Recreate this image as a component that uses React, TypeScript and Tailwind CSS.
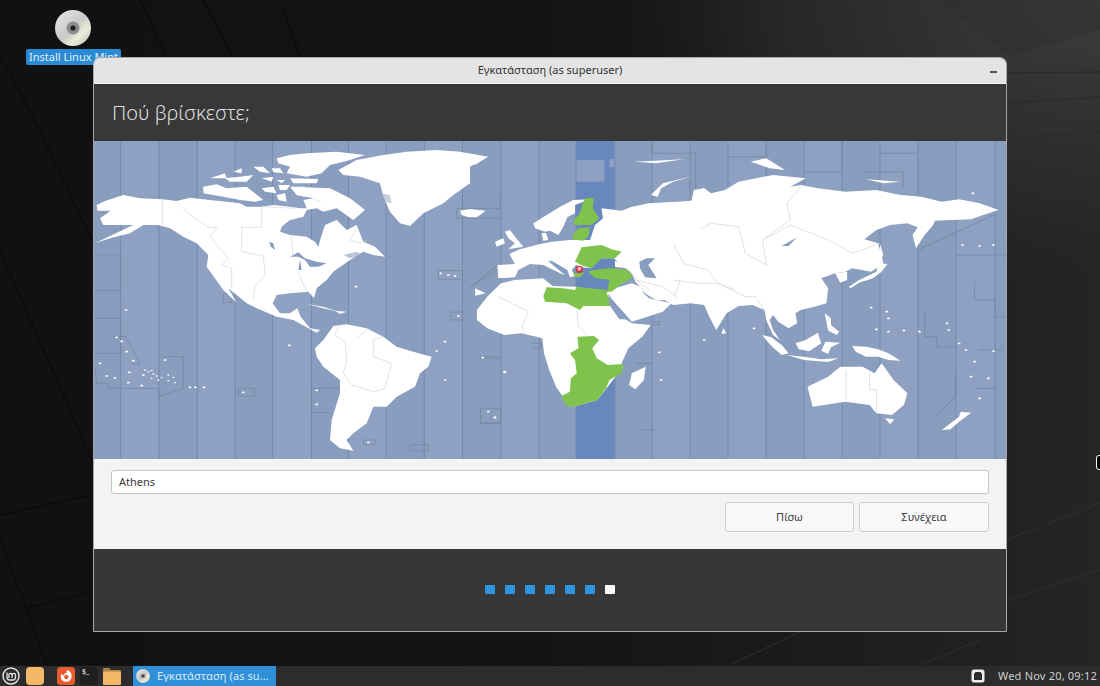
const FONT = "font-['Noto_Sans',sans-serif]";

const base = '#899dbf';
const band = '#6787bd';
const land = '#ffffff';
const green = '#7fc24c';

const LINES = [120.7, 159, 197.3, 235, 272.7, 311.5, 348.5, 386, 424.3, 462.5, 501, 539, 576, 615, 652, 690, 728, 766, 804, 842, 880, 918, 956, 995];

function P({ d, f = land }: { d: string; f?: string }) {
  return <polygon points={d} fill={f} />;
}

function Border({ d }: { d: string }) {
  return <polyline points={d} fill="none" stroke="#d4d4d4" strokeWidth="2" />;
}

function Zone({ d }: { d: string }) {
  return <polyline points={d} fill="none" stroke="#72869f" strokeOpacity="0.7" strokeWidth="3" />;
}

function Dots({ items, w = 8, h = 5 }: { items: number[][]; w?: number; h?: number }) {
  return (
    <>
      {items.map(([x, y]) => (
        <rect key={`${x}-${y}`} x={x - w / 2} y={y - h / 2} width={w} height={h} rx="2" fill={land} />
      ))}
    </>
  );
}

function WorldMap() {
  return (
    <div className="h-[318px] w-[912px] shrink-0 overflow-hidden bg-[#899dbf]">
      <svg viewBox="94 141 912 318" className="block h-[318px] w-[912px] blur-[0.35px]">
        <rect x="94" y="141" width="912" height="318" fill={base} />
        {LINES.map((x, i) =>
          i % 2 === 0 ? <rect key={`s${x}`} x={x} y="141" width={(LINES[i + 1] ?? 1006) - x} height="318" fill="#8ea1c3" /> : null,
        )}
        {LINES.map((x) => (
          <line key={x} x1={x} x2={x} y1="141" y2="459" stroke="#7589aa" strokeWidth="1" />
        ))}
        <g transform="translate(90 140) scale(0.33333)">
          <Zone d="15,345 92,345 92,452 15,452" />
          <Zone d="15,535 92,535 92,640 15,640" />
          <Zone d="70,590 108,590 150,672 125,672" />
          <Zone d="15,685 20,730 55,730 55,745 205,745 205,770 280,745 280,650 212,650" />
          <Zone d="445,745 495,745 495,768 445,768 445,745" />
          <Zone d="665,745 750,745" />
          <Zone d="665,745 665,818 720,818" />
          <Zone d="1045,392 1118,392 1118,418 1045,418 1045,392" />
          <Zone d="1082,516 1118,516 1118,540 1082,540 1082,516" />
          <Zone d="1172,805 1232,805 1232,850 1172,850 1172,805" />
          <Zone d="1170,650 1232,650" />
          <Zone d="1100,205 1230,205 1230,165" />
          <Zone d="1100,205 1100,235 1232,235" />
          <Zone d="1150,435 1232,385 1232,420" />
          <Zone d="820,900 855,900 855,914 820,914 820,900" />
          <Zone d="960,914 1015,914 1015,932 960,932 960,914" />
          <Zone d="400,462 425,462 425,488 400,488 400,462" />
        </g>
        <g transform="translate(470 140) scale(0.3444 0.33333)">
          <polygon points="308,3 418,3 418,58 405,58 405,82 420,82 420,957 308,957 308,125 390,125 390,60 308,60" fill={band} />
          <Zone d="530,40 655,40 655,150" />
          <Zone d="530,0 530,40" />
          <Zone d="750,50 860,50 860,0" />
          <Zone d="970,95 1080,95 1080,5" />
          <Zone d="1190,40 1300,40" />
          <Zone d="1145,95 1258,95 1258,145" />
          <Zone d="1300,330 1520,225" />
          <Zone d="1410,345 1560,345" />
          <Zone d="1465,425 1465,480 1525,480 1525,530 1560,530" />
          <Zone d="1320,510 1320,590 1355,590 1355,620 1410,620" />
          <Zone d="1475,630 1545,630" />
          <Zone d="1355,825 1410,770 1410,700" />
          <Zone d="30,805 30,850 88,850" />
          <Zone d="30,655 90,655" />
          <Zone d="500,870 535,870" />
          <Zone d="0,445 80,375" />
          <Zone d="530,545 550,545 550,555 530,555" />
          <Zone d="1465,745 1525,745" />
          <Zone d="530,670 480,670" />
          <Zone d="180,610 205,610 205,625 180,625" />
        </g>
        {/* the Americas */}
        <g transform="translate(90 140) scale(0.33333)">
          <P d="20,195 45,183 100,165 150,175 218,178 260,183 300,173 360,180 410,185 450,190 470,200 515,200 550,195 600,200 630,205 650,205 640,180 670,175 690,185 725,195 740,205 700,215 680,205 650,210 640,230 600,240 575,260 570,275 600,285 650,290 675,305 685,320 692,295 705,255 740,240 770,270 800,255 820,305 855,320 885,350 850,345 820,335 780,360 730,395 710,420 680,445 672,475 655,455 600,460 560,465 548,490 570,520 600,520 622,505 632,530 660,565 690,570 680,578 650,562 610,540 560,530 500,505 470,490 440,465 415,445 440,488 400,450 350,380 355,345 320,310 280,290 240,265 205,255 160,255 120,280 60,295 15,310 60,288 130,255 90,255 40,255 30,235 62,212 22,212" />
          <P d="340,140 380,133 410,145 470,140 520,180 495,185 450,180 400,170 340,160" />
          <P d="360,115 405,100 410,115 380,115" />
          <P d="405,115 450,110 490,105 470,125 420,125" />
          <P d="430,95 455,85 455,100" />
          <P d="490,80 520,80 540,100 510,95" />
          <P d="515,115 550,110 545,125" />
          <P d="515,145 550,140 560,160 525,155" />
          <P d="565,135 600,135 590,150 570,150" />
          <P d="600,115 685,117 680,130 610,130" />
          <P d="545,85 570,85 580,100 550,97" />
          <P d="560,55 600,45 650,40 740,35 825,45 770,63 720,75 695,100 650,110 590,100 600,80 565,70" />
          <P d="560,120 585,120 575,130" />
          <P d="560,165 585,160 590,185 565,180" />
          <P d="605,140 645,140 645,170 620,165" />
          <P d="600,140 720,145 780,175 825,210 790,240 740,205 700,190 670,175 620,165" />
          <P d="745,90 800,60 880,45 950,35 1040,30 1110,35 1195,50 1140,80 1140,130 1090,165 1060,190 1000,220 960,258 930,250 900,215 880,170 870,130 810,110 760,105" />
          <polygon points="870,160 900,165 905,190 885,185" fill={base} opacity="0.5" />
          <P d="1110,212 1140,207 1185,212 1170,225 1135,232 1115,225" />
          <P d="675,625 700,600 730,558 770,553 830,565 880,590 920,620 970,635 1025,650 1015,680 990,700 975,740 920,770 890,800 850,800 830,850 790,880 770,900 790,932 750,925 720,900 725,840 750,760 750,720 700,680 680,650" />
          <P d="650,492 700,500 745,515 700,505" />
          <P d="735,512 770,515 750,522" />
          <polygon points="600,350 625,337 645,355 680,365 710,370 685,380 660,380 645,360 625,350" fill={base} />
          <polygon points="630,360 635,390 625,390" fill={base} />
          <polygon points="538,305 550,310 555,330 542,320" fill={base} />
          <polygon points="760,345 800,335 815,345 780,355" fill={base} opacity="0.6" />
          <Dots items={[[108,510],[80,592],[95,604],[110,635],[130,662],[30,670],[50,708],[75,714],[115,728],[155,737],[118,697],[160,705],[225,660],[300,742],[316,742],[342,742],[1052,400],[1075,405],[1095,408],[798,440],[1040,633],[1065,605],[1066,720],[680,751],[680,793],[460,757],[1105,528],[1195,815],[1215,833],[1245,697],[835,907],[1178,653],[598,616]]} />
          <Dots w={6} h={4} items={[[165,690],[175,695],[185,692],[190,702],[200,708],[215,712],[235,722],[250,712],[205,720],[235,705],[185,715],[255,728]]} />
          <Border d="218,178 218,255" />
          <Border d="260,185 300,225 355,262 380,262 360,290 415,355 395,375 425,385 425,445" />
          <Border d="455,262 515,262 515,200 620,205" />
          <Border d="455,262 455,335 520,348 525,405 495,440 490,475" />
          <Border d="605,290 608,350" />
          <Border d="625,400 645,445 670,470" />
          <Border d="800,265 780,300 810,310 830,300" />
          <Border d="750,555 735,585 765,605 770,660 760,700 785,735 850,755 885,745 905,670 850,650 850,600 880,590" />
          <Border d="800,595 830,570" />
        </g>
        {/* Africa, Asia, Oceania */}
        <g transform="translate(470 140) scale(0.3444 0.33333)">
          <P d="20,510 50,470 90,430 130,420 212,415 240,438 300,440 395,445 410,490 440,530 470,550 525,555 500,590 460,625 440,670 445,680 400,740 370,780 300,800 270,770 250,740 230,690 215,640 210,595 150,580 100,585 50,565 20,540" />
          <P d="382,205 440,212 470,200 520,190 600,185 640,195 650,150 680,145 700,160 740,150 780,125 880,105 975,115 930,140 960,135 1010,145 1090,155 1180,150 1250,165 1310,170 1370,185 1420,178 1480,190 1535,210 1490,225 1455,238 1400,240 1350,242 1345,255 1320,285 1295,325 1285,285 1300,262 1270,250 1220,255 1180,270 1145,298 1185,310 1195,345 1200,370 1165,395 1110,385 1090,395 1060,400 1020,415 1040,445 1035,490 1000,500 960,510 945,520 950,550 925,565 895,545 880,525 870,540 880,570 900,600 880,585 860,540 855,510 820,495 780,498 745,520 715,570 695,530 680,495 640,490 590,495 565,480 540,482 510,462 498,445 480,425 470,400 400,340" />
          <P d="395,458 410,448 470,430 495,440 510,465 540,480 585,490 560,515 515,530 470,545 440,510 405,470" />
          <P d="1060,400 1095,395 1095,420 1075,428" />
          <P d="980,740 1040,710 1075,680 1140,680 1175,700 1195,670 1230,720 1270,760 1260,795 1225,825 1180,820 1160,795 1090,785 995,800" />
          <P d="1205,835 1232,838 1220,853" />
          <P d="1370,870 1420,830 1425,815 1455,818 1420,845 1395,868" />
          <P d="470,700 510,680 505,720 480,748 462,735" />
          <P d="848,585 875,592 905,615 925,640 905,645 875,618" />
          <P d="920,645 970,650 1020,658 1070,655 1040,666 970,660" />
          <P d="945,610 975,600 1010,578 1020,610 985,634 955,628" />
          <P d="1020,632 1032,605 1075,608 1048,622 1040,642" />
          <P d="1110,618 1150,620 1185,628 1215,640 1250,662 1215,660 1185,650 1150,650 1120,635" />
          <P d="1030,520 1048,535 1048,555 1072,575 1065,585 1040,572" />
          <P d="1100,440 1130,420 1180,395 1185,370 1212,372 1195,395 1170,415 1130,428 1105,445" />
          <P d="1190,310 1200,345 1192,360" />
          <P d="525,165 560,130 650,108 590,125 555,145 545,170" />
          <P d="815,65 860,55 915,90 870,85" />
          <P d="1150,118 1250,125 1200,130" />
          <P d="660,150 680,145 672,195 640,195" />
          <P d="735,565 745,580 730,582" />
          <P d="478,65 620,58 540,70" />
          <P d="15,445 45,460 15,467" />
          <P d="0,50 50,50 15,75" />
          <P d="0,210 45,212 20,232 0,232" />
          <polygon points="905,318 950,292 925,318" fill={base} />
          <polygon points="500,455 540,480 520,475" fill={base} />
          <Dots items={[[1165,503],[1210,515],[1215,535],[1180,568],[1215,575],[1260,572],[1305,575],[1385,550],[1390,570],[1420,610],[1440,630],[1465,665],[1455,710],[1505,715],[1480,775],[100,695],[72,832],[550,637],[1520,633],[555,720],[680,600],[825,565],[1040,555],[1460,160],[1430,315],[1480,318],[1520,315]]} />
          <P d="312,590 360,588 375,600 355,625 368,655 400,675 445,672 440,700 405,720 395,745 370,780 300,800 280,798 265,768 290,755 293,715 310,700 305,660 290,640 315,625" f={green} />
          <Border d="82,470 170,515 150,560 160,578" />
          <Border d="310,510 315,560 345,590" />
          <Border d="490,255 540,260 530,300 590,310 620,370 690,390 720,430 800,470 830,470 860,520" />
          <Border d="590,310 700,250 780,260 800,340 860,375 850,300 930,255 1040,300 1110,340 1190,310" />
          <Border d="960,140 920,190 930,240 850,300" />
          <Border d="590,420 660,430 720,430 770,450" />
          <Border d="595,470 610,420" />
          <Border d="480,420 560,440 600,470" />
          <Border d="1092,690 1092,780" />
          <Border d="1160,690 1160,750 1180,750 1180,820" />
        </g>
        {/* Europe, the Mediterranean and the selected zone */}
        <g transform="translate(480 190) scale(0.33333)">
          <P d="52,225 105,222 88,192 120,178 180,162 215,155 270,150 330,150 345,105 385,72 400,78 450,55 540,40 660,30 660,120 480,220 470,240 445,235 430,210 425,185 400,205 360,205 335,235 300,232 288,225 275,240 285,258 270,262 262,240 215,212 205,214 255,255 240,250 190,225 150,222 115,240 105,262 55,265" />
          <P d="160,100 200,75 240,50 280,30 330,28 285,45 285,70 262,82 250,110 235,135 210,122 195,125 165,115" />
          <P d="185,130 198,128 205,150 190,152" />
          <P d="75,125 90,120 105,140 130,170 85,178 105,160 85,145" />
          <P d="45,155 70,145 75,160 50,170" />
          <P d="312,30 322,24 342,24 338,55 358,85 335,105 285,105 280,92 300,70 305,50" f={green} />
          <P d="285,125 295,115 330,112 325,140 310,152 275,148" f={green} />
          <P d="305,172 365,165 395,178 425,185 405,205 365,205 335,235 310,228 285,215" f={green} />
          <P d="325,245 360,235 400,235 445,240 458,262 420,285 395,305 380,305 388,270 345,265" f={green} />
          <P d="280,250 300,250 315,245 300,262 285,262" f={green} />
          <polygon points="340,235 365,208 405,208 405,225 385,235 345,240" fill={band} />
          <polygon points="405,212 435,222 440,235 405,230" fill={land} />
          <polygon points="290,265 345,265 388,270 382,305 290,290" fill={band} />
          <P d="190,318 200,292 250,295 285,300 290,290 330,295 385,300 380,310 398,348 310,348 300,360 260,340 195,335" f={green} />
          <polygon points="385,310 405,345 442,388 418,388 388,345" fill={base} />
          <polygon points="478,215 500,205 525,205 505,225 530,265 495,262 480,235" fill={base} />
          <Border d="445,240 480,280 510,300" />
          <circle cx="298" cy="238" r="11" fill="#d0323a" />
          <circle cx="298" cy="236" r="6" fill="#f8bcbc" />
        </g>
      </svg>
    </div>
  );
}

function Wallpaper() {
  return (
    <svg viewBox="0 0 1100 686" className="absolute inset-0 h-full w-full">
      <defs>
        <linearGradient id="wp" x1="0" x2="1" y1="0" y2="0">
          <stop offset="0" stopColor="#111111" />
          <stop offset="0.5" stopColor="#141414" />
          <stop offset="0.8" stopColor="#1e1e1e" />
          <stop offset="1" stopColor="#252525" />
        </linearGradient>
        <radialGradient id="glow" cx="1" cy="0" r="0.42">
          <stop offset="0" stopColor="#3e3e3e" />
          <stop offset="0.7" stopColor="#2c2c2c" stopOpacity="0.7" />
          <stop offset="1" stopColor="#252525" stopOpacity="0" />
        </radialGradient>
      </defs>
      <rect width="1100" height="686" fill="url(#wp)" />
      <rect width="1100" height="686" fill="url(#glow)" />
      <g stroke="#0b0b0b" strokeWidth="1.5" fill="none">
        <line x1="0" y1="251" x2="92" y2="460" />
        <line x1="44" y1="140" x2="92" y2="240" />
        <line x1="0" y1="515" x2="92" y2="495" />
        <line x1="27" y1="608" x2="92" y2="592" />
        <line x1="0" y1="538" x2="47" y2="665" />
        <line x1="140" y1="0" x2="167" y2="57" />
        <line x1="203" y1="0" x2="233" y2="57" />
        <line x1="283" y1="7" x2="300" y2="57" />
        <line x1="0" y1="55" x2="45" y2="140" />
      </g>
      <g stroke="#2a2a2a" strokeWidth="1" fill="none">
        <line x1="1006" y1="73" x2="1100" y2="72" />
        <line x1="1006" y1="103" x2="1100" y2="97" />
        <line x1="1006" y1="138" x2="1100" y2="132" />
      </g>
      <g stroke="#303030" strokeWidth="1" fill="none">
        <line x1="1006" y1="540" x2="1100" y2="503" />
        <line x1="1006" y1="601" x2="1100" y2="570" />
        <line x1="920" y1="665" x2="980" y2="640" />
        <line x1="730" y1="665" x2="800" y2="632" />
      </g>
      <polygon points="940,0 1100,0 1100,30 1010,56" fill="#2e2e2e" opacity="0.5" />
    </svg>
  );
}

function Disc({ size }: { size: number }) {
  return (
    <svg width={size} height={size} viewBox="0 0 36 36" className="shrink-0">
      <defs>
        <linearGradient id={`d${size}`} x1="0" x2="1" y1="0" y2="1">
          <stop offset="0" stopColor="#e8e8e8" />
          <stop offset="0.5" stopColor="#c9c9c9" />
          <stop offset="0.7" stopColor="#ececd8" />
          <stop offset="1" stopColor="#bdbdbd" />
        </linearGradient>
      </defs>
      <circle cx="18" cy="18" r="18" fill={`url(#d${size})`} />
      <circle cx="18" cy="18" r="6.5" fill="#8d8d8d" />
      <circle cx="18" cy="18" r="2.6" fill="#202020" />
    </svg>
  );
}

function FolderFlat() {
  return <div className="h-[18px] w-[18px] rounded-sm bg-[#f4b968]" />;
}

function Firefoxish() {
  return (
    <svg width="18" height="18" viewBox="0 0 18 18">
      <rect width="18" height="18" rx="3.5" fill="#e95b2f" />
      <path d="M10 3 C13.5 4 15 7 14.5 10 C14 13.5 11 15 8.5 14.8 C5.5 14.5 3.5 12 3.8 9 C4 8 4.6 7 5 6.6 C5.2 8 6 8.6 6.8 8.4 C7.4 6.6 8.6 5.8 10 5.6 C9.6 4.6 9.8 3.8 10 3z" fill="#ffffff" />
      <circle cx="9.3" cy="10" r="2.2" fill="#e95b2f" />
    </svg>
  );
}

function Terminal() {
  return (
    <div className={`flex h-[18px] w-[18px] items-start rounded-sm bg-[#1f1f1f] pl-[2px] text-[7px] leading-[10px] text-white ${FONT}`}>
      $_
    </div>
  );
}

function Files() {
  return (
    <svg width="18" height="18" viewBox="0 0 18 18">
      <path d="M0 2 a1 1 0 0 1 1-1 h5 l2 2 h9 a1 1 0 0 1 1 1 v2 H0z" fill="#a98248" />
      <rect x="0" y="4.5" width="18" height="13.5" rx="1" fill="#f4b968" />
    </svg>
  );
}

function MintLogo() {
  return (
    <svg width="18" height="18" viewBox="0 0 18 18" fill="none" stroke="#e8e8e8">
      <circle cx="9" cy="9" r="8" strokeWidth="1.4" />
      <path d="M5 5.5 V10.5 a2.5 2.5 0 0 0 2.5 2.5 h3.5 a2.5 2.5 0 0 0 2.5-2.5 V8 a1.7 1.7 0 0 0-3.4 0 V11 M10.1 8 a1.6 1.6 0 0 0-3.2 0 V11" strokeWidth="1.3" />
    </svg>
  );
}

function Taskbar() {
  return (
    <footer className={`absolute bottom-0 left-0 flex h-5 w-full items-center bg-[#2c2c2c] text-[11px] ${FONT}`}>
      <div className="flex items-center pl-[2px]">
        <MintLogo />
        <div className="ml-[6px]"><FolderFlat /></div>
        <div className="ml-[13px]"><Firefoxish /></div>
        <div className="ml-[5px]"><Terminal /></div>
        <div className="ml-[5px]"><Files /></div>
      </div>
      <div className="ml-[12px] flex h-5 w-[143px] items-center gap-[7px] bg-[#2f8fd8] pl-[3px] text-[#dcecf8]">
        <Disc size={14} />
        <span className="tracking-[0.1px]">Εγκατάσταση (as su…</span>
      </div>
      <div className="ml-auto flex items-center gap-[13px] pr-[3px] text-[#cfcfcf]">
        <svg width="14" height="14" viewBox="0 0 14 14">
          <rect x="0.5" y="0.5" width="13" height="13" rx="2.5" fill="#eeeeee" />
          <path d="M3 11 V5 l1.5-2 h5 L11 5 v6z" fill="#2c2c2c" />
        </svg>
        <span className="tracking-[0.2px]">Wed Nov 20, 09:12</span>
      </div>
    </footer>
  );
}

function Installer() {
  return (
    <section className={`absolute left-[93px] top-[57px] flex h-[575px] w-[914px] flex-col overflow-hidden rounded-t-[7px] border border-[#a8a8a8] ${FONT}`}>
      <header className="relative flex h-[26px] shrink-0 items-center justify-center border-b border-[#f4f4f4] bg-[#e4e4e4] text-[11px] text-[#333333]">
        Εγκατάσταση (as superuser)
        <span className="absolute right-[9px] top-[13px] h-[2px] w-[7px] bg-[#555555]" />
      </header>
      <div className="flex h-[57px] shrink-0 items-center bg-[#383838] pl-[18px] text-[20px] font-light text-[#dddddd]">
        Πού βρίσκεστε;
      </div>
      <WorldMap />
      <div className="flex h-[90px] shrink-0 flex-col bg-[#f3f3f3] px-[17px] pt-[11px]">
        <div className="flex h-[24px] items-center rounded-[3px] border border-[#c6c6c6] bg-white px-[7px] text-[11px] text-[#3c3c3c]">
          Athens
        </div>
        <div className="mt-[8px] flex justify-end gap-[5px]">
          <button className="h-[30px] w-[129px] rounded-[3px] border border-[#cfcfcf] bg-[#f8f8f8] text-[11px] text-[#3c3c3c]">Πίσω</button>
          <button className="h-[30px] w-[130px] rounded-[3px] border border-[#cfcfcf] bg-[#f8f8f8] text-[11px] text-[#3c3c3c]">Συνέχεια</button>
        </div>
      </div>
      <div className="flex flex-1 items-center justify-center gap-[10px] bg-[#373737] pb-[1px] pr-[1px]">
        {[0, 1, 2, 3, 4, 5].map((i) => (
          <span key={i} className="h-[9px] w-[10px] rounded-[1px] bg-[#2f95e0]" />
        ))}
        <span className="h-[9px] w-[10px] rounded-[1px] bg-white" />
      </div>
    </section>
  );
}

export default function App() {
  return (
    <main className={`relative h-[686px] w-[1100px] overflow-hidden bg-[#151515] ${FONT}`}>
      <Wallpaper />
      <div className="absolute left-[26px] top-[10px] flex w-[95px] flex-col items-center">
        <div className="mr-[1px]"><Disc size={36} /></div>
        <span className="mt-[3px] flex h-[16px] w-[95px] items-center justify-center rounded-[2px] bg-[#2a8ad4] text-[11px] text-[#e4f0f9]">
          Install Linux Mint
        </span>
      </div>
      <Installer />
      <div className="absolute left-[1096px] top-[455px] h-[15px] w-[10px] rounded-[3px] border border-white bg-black" />
      <Taskbar />
    </main>
  );
}
